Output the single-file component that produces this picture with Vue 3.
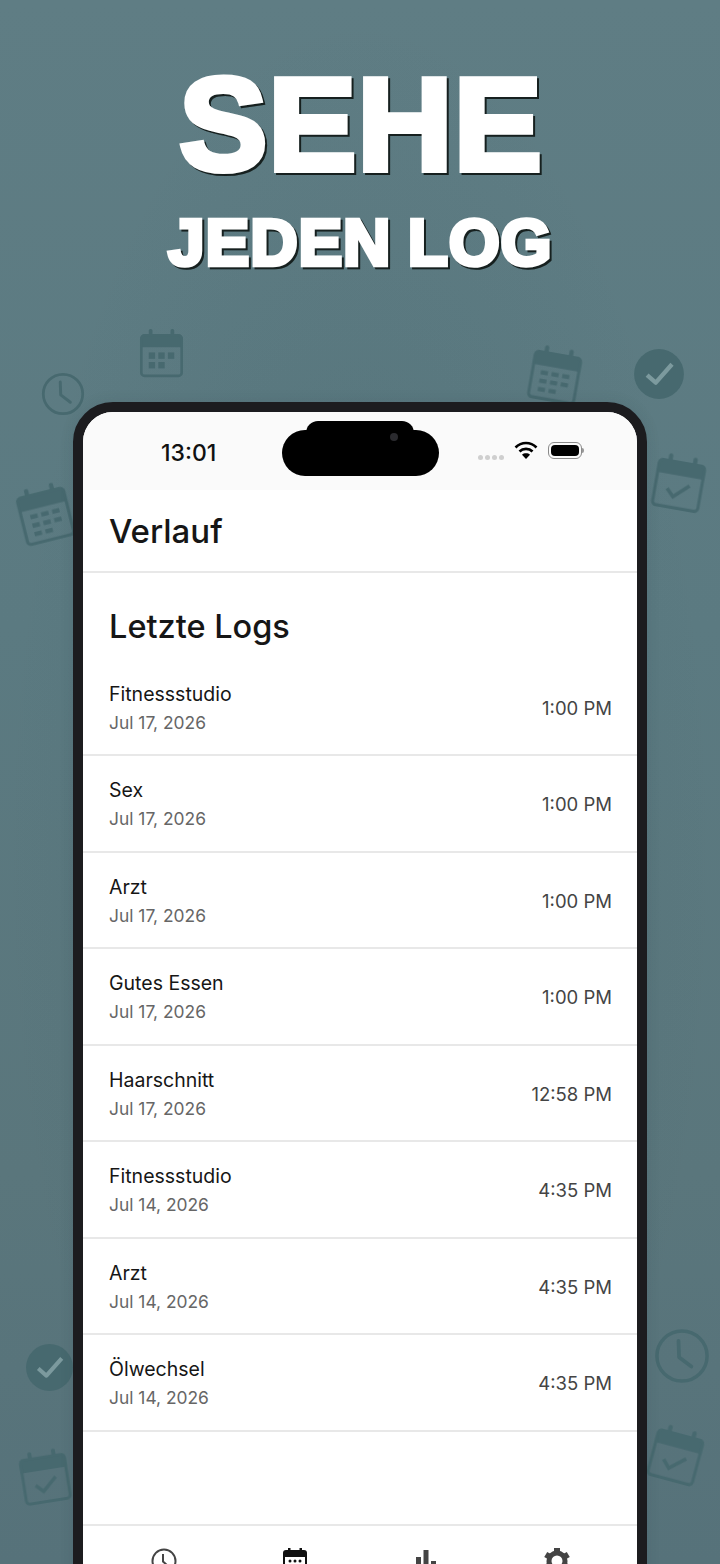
<script setup>
const decor = [
  { kind: 'grid', cls: 'd1' },
  { kind: 'clock', cls: 'd2' },
  { kind: 'dense', cls: 'd3' },
  { kind: 'dense', cls: 'd4' },
  { kind: 'done', cls: 'd5' },
  { kind: 'check', cls: 'd6' },
  { kind: 'done', cls: 'd7' },
  { kind: 'check', cls: 'd8' },
  { kind: 'clock', cls: 'd9' },
  { kind: 'check', cls: 'd10' }
]

const logs = [
  { name: 'Fitnessstudio', date: 'Jul 17, 2026', time: '1:00 PM' },
  { name: 'Sex', date: 'Jul 17, 2026', time: '1:00 PM' },
  { name: 'Arzt', date: 'Jul 17, 2026', time: '1:00 PM' },
  { name: 'Gutes Essen', date: 'Jul 17, 2026', time: '1:00 PM' },
  { name: 'Haarschnitt', date: 'Jul 17, 2026', time: '12:58 PM' },
  { name: 'Fitnessstudio', date: 'Jul 14, 2026', time: '4:35 PM' },
  { name: 'Arzt', date: 'Jul 14, 2026', time: '4:35 PM' },
  { name: 'Ölwechsel', date: 'Jul 14, 2026', time: '4:35 PM' }
]

const gridCells = [
  [12, 23], [21, 23], [30, 23],
  [12, 32], [21, 32]
]

const denseCells = [
  [12, 22], [21, 22], [30, 22],
  [12, 29], [21, 29], [30, 29],
  [12, 36], [21, 36]
]
</script>

<template>
  <div class="page">
    <svg
        v-for="d in decor"
        :key="d.cls"
        class="decor"
        :class="d.cls"
        viewBox="0 0 48 48"
    >
      <template v-if="d.kind === 'clock'">
        <circle cx="24" cy="24" r="21.5" fill="none" stroke="currentColor" stroke-width="3" />
        <path d="M21 11 L21.500 25 L32 33" fill="none" stroke="currentColor" stroke-width="3.200" stroke-linecap="round" stroke-linejoin="round" />
      </template>
      <template v-else-if="d.kind === 'done'">
        <circle cx="24" cy="24" r="23" fill="currentColor" />
        <path d="M13 25 L21 32 L36 15" fill="none" stroke="#7c9a9e" stroke-width="4" stroke-linejoin="round" />
      </template>
      <template v-else>
        <rect x="12" y="1" width="3.500" height="9" rx="1.500" fill="currentColor" />
        <rect x="32.500" y="1" width="3.500" height="9" rx="1.500" fill="currentColor" />
        <path d="M8 6 H40 A4 4 0 0 1 44 10 V18 H4 V10 A4 4 0 0 1 8 6 Z" fill="currentColor" />
        <rect x="5" y="7" width="38" height="38" rx="3" fill="none" stroke="currentColor" stroke-width="2.500" />
        <template v-if="d.kind === 'grid'">
          <rect v-for="c in gridCells" :key="c.join()" :x="c[0]" :y="c[1]" width="6" height="6" fill="currentColor" />
        </template>
        <template v-else-if="d.kind === 'dense'">
          <rect v-for="c in denseCells" :key="c.join()" :x="c[0]" :y="c[1]" width="6" height="3.500" fill="currentColor" />
        </template>
        <path v-else d="M15 30 L21 36 L33 25" fill="none" stroke="currentColor" stroke-width="3" />
      </template>
    </svg>

    <header class="hero">
      <h1>SEHE</h1>
      <h2>JEDEN LOG</h2>
    </header>

    <div class="phone">
      <div class="screen">
        <div class="status">
          <span class="clock-time">13:01</span>
          <div class="island">
            <div class="island-top"></div>
            <div class="camera"></div>
          </div>
          <div class="status-right">
            <div class="dots">
              <i></i><i></i><i></i><i></i>
            </div>
            <svg class="wifi" viewBox="0 0 24 20">
              <path d="M1.500 7.500 C7.500 1.500 16.500 1.500 22.500 7.500" fill="none" stroke="#000" stroke-width="2.600" />
              <path d="M5.500 11.500 C9 8 15 8 18.500 11.500" fill="none" stroke="#000" stroke-width="2.600" />
              <path d="M12 19 L8 14.700 C10 12.800 14 12.800 16 14.700 Z" fill="#000" />
            </svg>
            <div class="battery"><div class="battery-fill"></div></div>
            <div class="battery-nub"></div>
          </div>
        </div>

        <div class="title-bar">Verlauf</div>

        <h3 class="section">Letzte Logs</h3>

        <ul class="list">
          <li v-for="(log, i) in logs" :key="i" class="row">
            <div>
              <div class="name">{{ log.name }}</div>
              <div class="date">{{ log.date }}</div>
            </div>
            <div class="time">{{ log.time }}</div>
          </li>
        </ul>

        <nav class="tabs">
          <div class="tab">
            <svg viewBox="0 0 26 26" width="26" height="26">
              <circle cx="13" cy="13" r="11.500" fill="none" stroke="#444" stroke-width="2" />
              <path d="M12 6 V13.500 L17 18" fill="none" stroke="#444" stroke-width="2" />
            </svg>
          </div>
          <div class="tab">
            <svg viewBox="0 0 26 26" width="26" height="26">
              <rect x="6" y="0" width="2.500" height="5" fill="#111" />
              <rect x="17.500" y="0" width="2.500" height="5" fill="#111" />
              <rect x="1" y="2" width="24" height="24" rx="3" fill="#111" />
              <rect x="3" y="9" width="20" height="15" fill="#fff" />
              <circle cx="8" cy="13" r="1.500" fill="#111" />
              <circle cx="13" cy="13" r="1.500" fill="#111" />
              <circle cx="18" cy="13" r="1.500" fill="#111" />
            </svg>
          </div>
          <div class="tab">
            <svg viewBox="0 0 26 26" width="26" height="26">
              <rect x="3" y="9" width="5" height="17" fill="#444" />
              <rect x="10.500" y="2" width="5" height="24" fill="#444" />
              <rect x="18" y="13" width="5" height="13" fill="#444" />
            </svg>
          </div>
          <div class="tab">
            <svg viewBox="0 0 26 26" width="26" height="26">
              <circle cx="13" cy="13" r="8" fill="none" stroke="#444" stroke-width="5" />
              <g fill="#444">
                <rect x="10" y="0" width="6" height="5" />
                <rect x="10" y="0" width="6" height="5" transform="rotate(60 13 13)" />
                <rect x="10" y="0" width="6" height="5" transform="rotate(-60 13 13)" />
                <rect x="10" y="0" width="6" height="5" transform="rotate(120 13 13)" />
                <rect x="10" y="0" width="6" height="5" transform="rotate(-120 13 13)" />
                <rect x="10" y="0" width="6" height="5" transform="rotate(180 13 13)" />
              </g>
            </svg>
          </div>
        </nav>
      </div>
    </div>
  </div>
</template>

<style scoped>
.page {
  position: relative;
  width: 720px;
  height: 1564px;
  overflow: hidden;
  background:
      radial-gradient(ellipse at 50% 55%, rgba(40,70,78,.14), rgba(40,70,78,0) 70%),
      linear-gradient(180deg, #5f7d84 0%, #5b7a81 40%, #5a767c 75%, #56727a 100%);
  font-family: "Inter", "Noto Sans", sans-serif;
}
.decor {
  position: absolute;
  color: #47696f;
  filter: blur(.4px);
}
.d1 { left: 136px; top: 327px; width: 51px; height: 53px; }
.d2 { left: 41px; top: 372px; width: 44px; height: 44px; }
.d3 { left: 15px; top: 483px; width: 60px; height: 62px; transform: rotate(-14deg); }
.d4 { left: 526px; top: 346px; width: 58px; height: 58px; transform: rotate(10deg); }
.d5 { left: 633px; top: 348px; width: 52px; height: 52px; }
.d6 { left: 650px; top: 453px; width: 58px; height: 60px; transform: rotate(10deg); }
.d7 { left: 25px; top: 1343px; width: 49px; height: 49px; }
.d8 { left: 17px; top: 1447px; width: 56px; height: 60px; transform: rotate(-9deg); }
.d9 { left: 654px; top: 1328px; width: 56px; height: 56px; }
.d10 { left: 647px; top: 1425px; width: 58px; height: 60px; transform: rotate(15deg); }
.hero {
  height: 402px;
  padding-top: 52px;
  box-sizing: border-box;
  text-align: center;
  color: #fff;
  font-family: "Liberation Sans", sans-serif;
  font-weight: 700;
}
.hero h1,
.hero h2 {
  margin: 0;
  font-weight: 700;
  filter: drop-shadow(2px 2px 0 #16201f);
}
.hero h1 {
  padding-left: 2px;
  font-size: 132px;
  line-height: 146px;
  letter-spacing: 1px;
  -webkit-text-stroke: 6px #fff;
}
.hero h2 {
  margin-top: 7px;
  padding-left: 1px;
  font-size: 65px;
  line-height: 76px;
  letter-spacing: 1.300px;
  word-spacing: -3px;
  -webkit-text-stroke: 4.500px #fff;
}
.phone {
  position: relative;
  width: 554px;
  margin: 0 auto;
  height: 1300px;
  border: 10px solid #1c1c1f;
  border-radius: 40px;
  background: #fff;
  overflow: hidden;
  box-shadow: 0 0 14px rgba(30,50,55,.12);
}
.screen {
  height: 100%;
}
.status {
  position: relative;
  height: 78px;
  background: #fafafa;
}
.clock-time {
  position: absolute;
  left: 78px;
  top: 26px;
  font-size: 23px;
  font-weight: 500;
  line-height: 30px;
  color: #111;
}
.island {
  position: absolute;
  left: 199px;
  top: 18px;
  width: 157px;
  height: 46px;
  border-radius: 23px;
  background: #000;
}
.island-top {
  position: absolute;
  left: 24px;
  top: -9px;
  width: 108px;
  height: 30px;
  border-radius: 12px 12px 0 0;
  background: #000;
}
.camera {
  position: absolute;
  left: 108px;
  top: 3px;
  width: 8px;
  height: 8px;
  border-radius: 50%;
  background: #2a2a2e;
}
.status-right {
  position: absolute;
  left: 395px;
  top: 28px;
  display: flex;
  align-items: center;
}
.dots {
  display: flex;
  gap: 2px;
  margin-top: 14px;
  margin-right: 10px;
}
.dots i {
  width: 5px;
  height: 5px;
  border-radius: 50%;
  background: #cfcfcf;
}
.wifi {
  width: 24px;
  height: 20px;
  margin-right: 10px;
}
.battery {
  width: 34px;
  height: 17px;
  box-sizing: border-box;
  padding: 2px;
  border: 1px solid #8a8a8a;
  border-radius: 6px;
}
.battery-fill {
  height: 100%;
  border-radius: 4px;
  background: #000;
}
.battery-nub {
  width: 2px;
  height: 5px;
  background: #999;
  border-radius: 0 2px 2px 0;
}
.title-bar {
  height: 81px;
  padding-left: 26px;
  border-bottom: 2px solid #e8e8e8;
  display: flex;
  align-items: center;
  font-size: 33px;
  font-weight: 500;
  color: #161616;
}
.section {
  margin: 0;
  height: 86.500px;
  padding: 32px 0 0 26px;
  box-sizing: border-box;
  font-size: 32.500px;
  line-height: 44px;
  font-weight: 500;
  color: #161616;
}
.list {
  list-style: none;
  margin: 0;
  padding: 0;
}
.row {
  height: 96.500px;
  box-sizing: border-box;
  padding: 1.500px 25px 0 26px;
  border-bottom: 2px solid #e8e8e8;
  display: flex;
  justify-content: space-between;
  align-items: center;
}
.name {
  font-size: 19.500px;
  line-height: 26px;
  color: #161616;
}
.date {
  margin-top: 4px;
  font-size: 17.400px;
  line-height: 24px;
  color: #666;
}
.time {
  font-size: 18.500px;
  color: #444;
}
.tabs {
  margin-top: 92px;
  padding: 22px 15px 0;
  border-top: 2px solid #e8e8e8;
  display: grid;
  grid-template-columns: repeat(4, 1fr);
}
.tab {
  display: flex;
  justify-content: center;
}
</style>
